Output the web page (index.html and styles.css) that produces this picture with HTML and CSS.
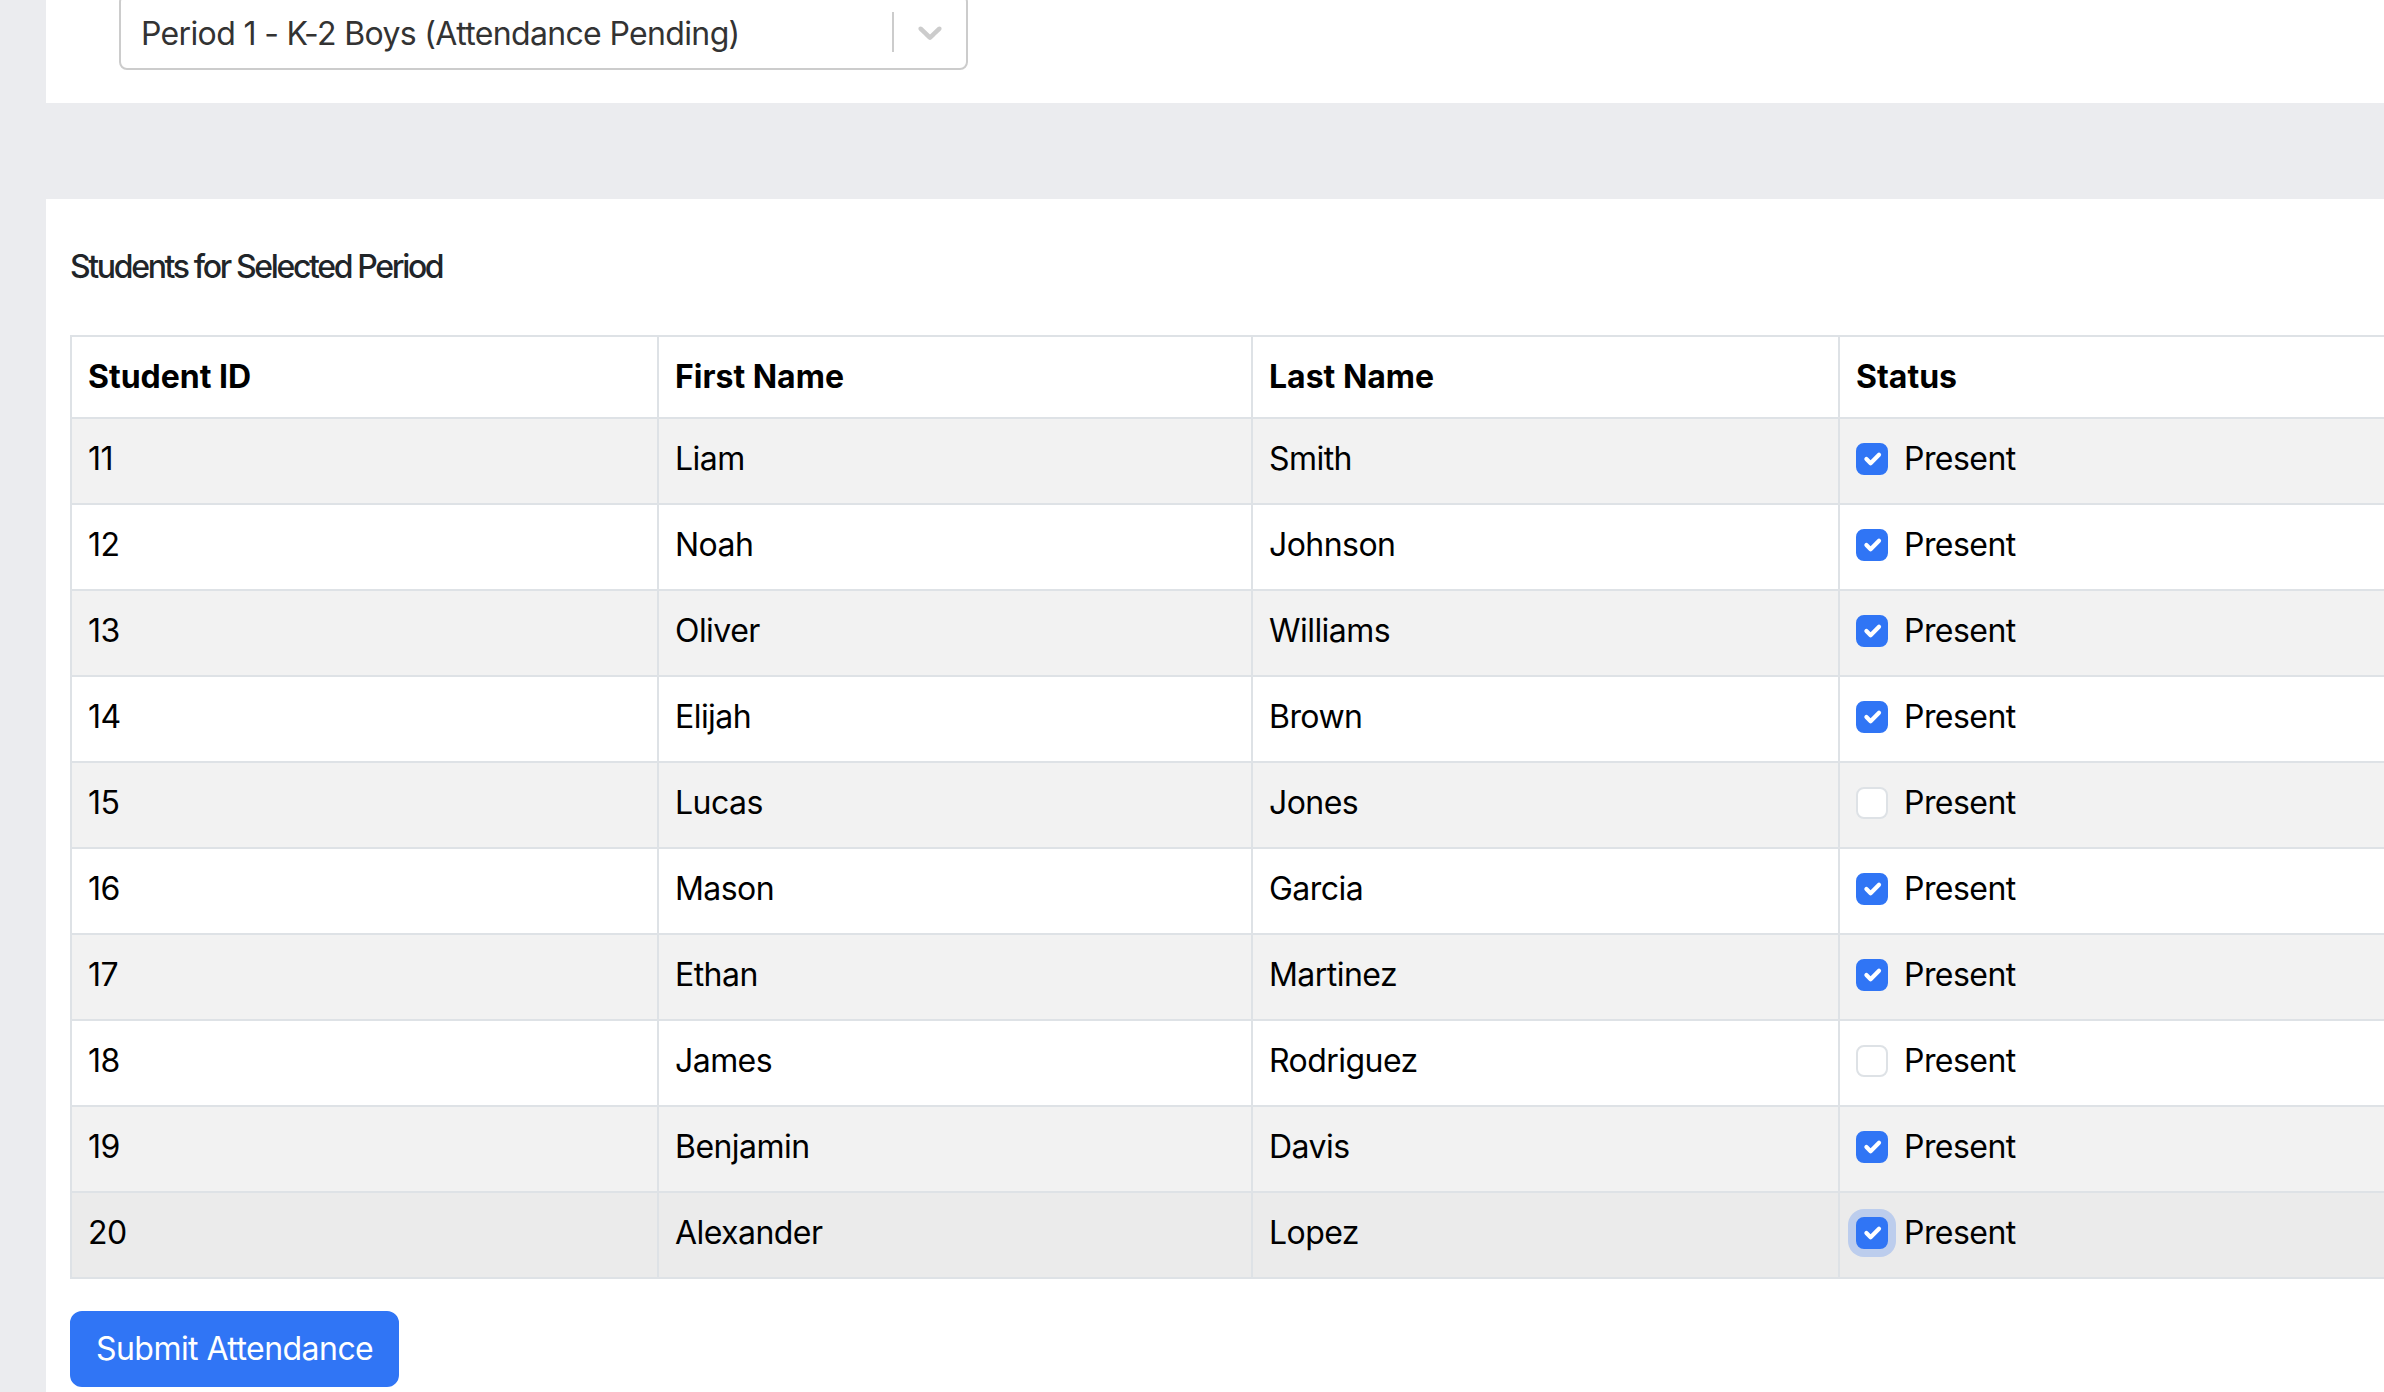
FILE: index.html
```html
<!DOCTYPE html>
<html lang="en">
<head>
<meta charset="utf-8">
<title>Attendance</title>
<link rel="stylesheet" href="styles.css">
</head>
<body>
<div class="page">
  <section class="card card-top">
    <div class="select">
      <div class="select-value">Period 1 - K-2 Boys (Attendance Pending)</div>
      <div class="select-indicators">
        <span class="select-sep"></span>
        <span class="select-arrow">
          <svg viewBox="0 0 20 20" width="40" height="40" aria-hidden="true"><path d="M4.516 7.548c0.436-0.446 1.043-0.481 1.576 0l3.908 3.747 3.908-3.747c0.533-0.481 1.141-0.446 1.574 0 0.436 0.445 0.408 1.197 0 1.615-0.406 0.418-4.695 4.502-4.695 4.502-0.217 0.223-0.502 0.335-0.787 0.335s-0.57-0.112-0.789-0.335c0 0-4.287-4.084-4.695-4.502s-0.436-1.17 0-1.615z"/></svg>
        </span>
      </div>
    </div>
  </section>

  <section class="card card-main">
    <h6 class="section-title">Students for Selected Period</h6>
    <table class="att-table">
      <thead>
        <tr>
          <th class="c-id">Student ID</th>
          <th class="c-first">First Name</th>
          <th class="c-last">Last Name</th>
          <th class="c-status">Status</th>
        </tr>
      </thead>
      <tbody>
        <tr class="odd"><td>11</td><td>Liam</td><td>Smith</td><td><div class="form-check"><span class="cb checked"><svg viewBox="0 0 20 20"><path d="m6 10 3 3 6-6"/></svg></span><span>Present</span></div></td></tr>
        <tr><td>12</td><td>Noah</td><td>Johnson</td><td><div class="form-check"><span class="cb checked"><svg viewBox="0 0 20 20"><path d="m6 10 3 3 6-6"/></svg></span><span>Present</span></div></td></tr>
        <tr class="odd"><td>13</td><td>Oliver</td><td>Williams</td><td><div class="form-check"><span class="cb checked"><svg viewBox="0 0 20 20"><path d="m6 10 3 3 6-6"/></svg></span><span>Present</span></div></td></tr>
        <tr><td>14</td><td>Elijah</td><td>Brown</td><td><div class="form-check"><span class="cb checked"><svg viewBox="0 0 20 20"><path d="m6 10 3 3 6-6"/></svg></span><span>Present</span></div></td></tr>
        <tr class="odd"><td>15</td><td>Lucas</td><td>Jones</td><td><div class="form-check"><span class="cb"></span><span>Present</span></div></td></tr>
        <tr><td>16</td><td>Mason</td><td>Garcia</td><td><div class="form-check"><span class="cb checked"><svg viewBox="0 0 20 20"><path d="m6 10 3 3 6-6"/></svg></span><span>Present</span></div></td></tr>
        <tr class="odd"><td>17</td><td>Ethan</td><td>Martinez</td><td><div class="form-check"><span class="cb checked"><svg viewBox="0 0 20 20"><path d="m6 10 3 3 6-6"/></svg></span><span>Present</span></div></td></tr>
        <tr><td>18</td><td>James</td><td>Rodriguez</td><td><div class="form-check"><span class="cb"></span><span>Present</span></div></td></tr>
        <tr class="odd"><td>19</td><td>Benjamin</td><td>Davis</td><td><div class="form-check"><span class="cb checked"><svg viewBox="0 0 20 20"><path d="m6 10 3 3 6-6"/></svg></span><span>Present</span></div></td></tr>
        <tr class="hover"><td>20</td><td>Alexander</td><td>Lopez</td><td><div class="form-check"><span class="cb checked focus"><svg viewBox="0 0 20 20"><path d="m6 10 3 3 6-6"/></svg></span><span>Present</span></div></td></tr>
      </tbody>
    </table>
    <button class="btn-submit" type="button">Submit Attendance</button>
  </section>
</div>
</body>
</html>
```

FILE: styles.css
```css
html, body {
  margin: 0;
  overflow: hidden;
}

body {
  background: #ebecef;
  font-family: Inter, "Noto Sans", "Liberation Sans", sans-serif;
  color: #000;
}

.page {
  padding-left: 46px;
  width: 2500px;
}

.card {
  background: #fff;
}

.card-top {
  padding: 0 0 33px 73px;
}

.select {
  margin-top: -6px;
  width: 849px;
  height: 76px;
  box-sizing: border-box;
  border: 2px solid #ccc;
  border-radius: 8px;
  display: flex;
  align-items: center;
  background: #fff;
}

.select-value {
  flex: 1;
  padding: 3px 0 0 20px;
  font-size: 32px;
  line-height: 48px;
  color: #333;
  letter-spacing: -0.65px;
}

.select-indicators {
  align-self: stretch;
  display: flex;
  align-items: center;
}

.select-sep {
  align-self: stretch;
  width: 2px;
  margin: 16px 0;
  background: #ccc;
}

.select-arrow {
  display: flex;
  padding: 16px;
}

.select-arrow svg {
  fill: #ccc;
}

.card-main {
  margin-top: 96px;
  padding: 48px 24px 24px;
}

.section-title {
  margin: 0 0 49px;
  padding-top: 1px;
  font-size: 32px;
  line-height: 38.4px;
  height: 38.4px;
  font-weight: 500;
  color: #212529;
  letter-spacing: -2.35px;
}

.att-table {
  width: 2400px;
  table-layout: fixed;
  border-collapse: separate;
  border-spacing: 0;
  border-top: 2px solid #dee2e6;
  margin-bottom: 32px;
}

.att-table th,
.att-table td {
  box-sizing: border-box;
  padding: 16px;
  border-left: 2px solid #dee2e6;
  border-bottom: 2px solid #dee2e6;
  text-align: left;
  vertical-align: top;
  font-size: 32px;
  line-height: 48px;
  color: #000;
}

.att-table th {
  font-weight: 700;
}

.att-table td {
  font-weight: 400;
  letter-spacing: -0.55px;
}

.c-id { width: 587px; }
.c-first { width: 594px; }
.c-last { width: 587px; }
.c-status { width: 632px; }

.att-table tr.odd td {
  background: #f2f2f2;
}

.att-table tr.hover td {
  background: #ebebeb;
}

.form-check {
  display: flex;
  align-items: flex-start;
  gap: 16px;
  min-height: 48px;
  margin-bottom: 4px;
}

.cb {
  flex: none;
  width: 32px;
  height: 32px;
  margin-top: 8px;
  box-sizing: border-box;
  border: 2px solid #dee2e6;
  border-radius: 8px;
  background: #fff;
  display: flex;
}

.cb.checked {
  background: #3075f5;
  border-color: #3075f5;
}

.cb.focus {
  box-shadow: 0 0 0 8px rgba(48, 117, 245, 0.25);
}

.cb svg {
  width: 100%;
  height: 100%;
  fill: none;
  stroke: #fff;
  stroke-width: 3;
  stroke-linecap: round;
  stroke-linejoin: round;
}

.btn-submit {
  display: inline-block;
  margin: 0;
  padding: 12px 24px;
  border: 2px solid #3075f5;
  border-radius: 12px;
  background: #3075f5;
  color: #fff;
  font-family: inherit;
  font-size: 32px;
  line-height: 48px;
  font-weight: 400;
  letter-spacing: -0.55px;
  cursor: pointer;
}
```
